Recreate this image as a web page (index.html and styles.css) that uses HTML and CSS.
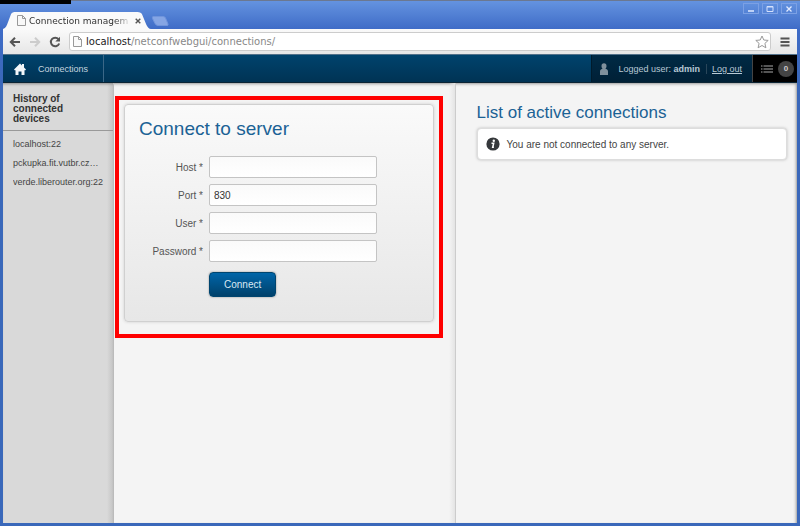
FILE: index.html
```html
<!DOCTYPE html>
<html lang="en">
<head>
<meta charset="utf-8">
<title>Connection management</title>
<link rel="stylesheet" href="styles.css">
</head>
<body>
<div class="window">
  <div class="titlebar">
    <div class="tab">
      <svg class="tab-shape" viewBox="0 0 152 18" preserveAspectRatio="none" aria-hidden="true"><path d="M0 18C3 17 4 14 5 11L8 3Q9 0 12 0H138Q142 0 143 3L147 13Q149 18 152 18Z" fill="#fafafa"/></svg>
      <svg class="page-icon" viewBox="0 0 9 11" aria-hidden="true"><path d="M.5.5h5l3 3v7h-8zM5.500.5v3h3" fill="#f8f8f8" stroke="#999"/></svg>
      <span class="tab-title">Connection managem</span>
      <button class="tab-close" aria-label="Close tab"><svg viewBox="0 0 6 6"><path d="M.7.7l4.600 4.600M5.300.7L.7 5.300" stroke="#555" stroke-width="1.400"/></svg></button>
    </div>
    <button class="new-tab" aria-label="New tab"><svg viewBox="0 0 18 10"><path d="M2 .5h10q2 0 2.500 1.500l2.500 6q.5 1.500-1 1.500h-9q-2 0-3-2l-2.500-5q-.5-2 .5-2z" fill="#85a5e4" stroke="#7195dc"/></svg></button>
    <div class="window-buttons">
      <button aria-label="Minimize"><svg viewBox="0 0 8 8"><path d="M1 6h6" stroke="#e1eaff" stroke-width="1.500"/></svg></button>
      <button aria-label="Maximize"><svg viewBox="0 0 8 8"><path d="M1 1.500h6v5H1zM1 2h6" fill="none" stroke="#d3e0fc"/></svg></button>
      <button aria-label="Close"><svg viewBox="0 0 8 8"><path d="M1.500 1.500l5 5M6.500 1.500l-5 5" stroke="#e1eaff" stroke-width="1.300"/></svg></button>
    </div>
  </div>

  <div class="toolbar">
    <button class="tool" aria-label="Back"><svg viewBox="0 0 12 12"><path d="M11 6H2M6 1.800L1.800 6 6 10.200" fill="none" stroke="#555" stroke-width="2"/></svg></button>
    <button class="tool" aria-label="Forward"><svg viewBox="0 0 12 12"><path d="M1 6h9M6 1.800L10.200 6 6 10.200" fill="none" stroke="#ccc" stroke-width="2"/></svg></button>
    <button class="tool" aria-label="Reload"><svg viewBox="0 0 12 12"><path d="M9.500 3.200A4.300 4.300 0 1 0 10.200 7.500" fill="none" stroke="#555" stroke-width="2"/><path d="M11 .8V5.500H6.300z" fill="#555"/></svg></button>
    <div class="address">
      <svg class="page-icon" viewBox="0 0 9 11" aria-hidden="true"><path d="M.5.5h5l3 3v7h-8zM5.500.5v3h3" fill="#fafafa" stroke="#999"/></svg>
      <span class="url">localhost<span class="path">/netconfwebgui/connections/</span></span>
      <button class="star" aria-label="Bookmark"><svg viewBox="0 0 14 14"><path d="M7 1l1.800 4 4.400.4-3.300 3 1 4.400L7 10.500l-3.900 2.300 1-4.400-3.300-3L5.200 5z" fill="#fff" stroke="#999" stroke-linejoin="round"/></svg></button>
    </div>
    <button class="tool menu" aria-label="Menu"><svg viewBox="0 0 12 12"><path d="M1.500 2.500h9M1.500 6h9M1.500 9.500h9" stroke="#555" stroke-width="2"/></svg></button>
  </div>

  <nav class="nav">
    <a class="nav-home" href="#">
      <svg viewBox="0 0 12 12" aria-hidden="true"><path d="M6 .5L8 2.500V1h2v3.400l2 2-1 1-.5-.5V12H7.500V8.500h-3V12h-3V6.900l-.5.500-1-1z" fill="#f3f7fa"/></svg>
      <span>Connections</span>
    </a>
    <div class="user">
      <svg viewBox="0 0 8 12" aria-hidden="true"><path d="M4 .3c1.600 0 2.500 1.100 2.500 2.600C6.500 4.200 6 5.300 5.200 5.800 6.500 6.200 8 6.500 8 8.500V12H0V8.500c0-2 1.500-2.300 2.800-2.700C2 5.300 1.500 4.200 1.500 2.900 1.500 1.400 2.400.3 4 .3z" fill="#80909c"/></svg>
      <span class="logged">Logged user: <b>admin</b></span>
      <span class="divider"></span>
      <a class="logout" href="#">Log out</a>
    </div>
    <button class="messages" aria-label="Messages: 0">
      <svg viewBox="0 0 12 8" aria-hidden="true"><path d="M0 1h1.500M2.500 1H12M0 4h1.500M2.500 4H12M0 7h1.500M2.500 7H12" stroke="#aaa"/></svg>
      <span class="count">0</span>
    </button>
  </nav>

  <div class="content">
    <aside class="history">
      <h2>History of connected devices</h2>
      <ul>
        <li><a href="#">localhost:22</a></li>
        <li><a href="#">pckupka.fit.vutbr.cz…</a></li>
        <li><a href="#">verde.liberouter.org:22</a></li>
      </ul>
    </aside>

    <main class="connect">
      <div class="highlight">
        <form class="panel">
          <h1>Connect to server</h1>
          <div class="fields">
            <label for="host">Host *</label><input id="host" type="text">
            <label for="port">Port *</label><input id="port" type="text" value="830">
            <label for="user">User *</label><input id="user" type="text">
            <label for="password">Password *</label><input id="password" type="password">
          </div>
          <button class="submit" type="button">Connect</button>
        </form>
      </div>
    </main>

    <section class="active">
      <h2>List of active connections</h2>
      <p class="notice">
        <svg viewBox="0 0 14 14" aria-hidden="true"><circle cx="7" cy="7" r="6.600" fill="#35383b"/><circle cx="7.800" cy="3.700" r="1.200" fill="#fff"/><path d="M5.500 6.300h2.200L6.700 10.300h1.200" fill="none" stroke="#fff" stroke-width="1.500"/></svg>
        <span>You are not connected to any server.</span>
      </p>
    </section>
  </div>
</div>
<div class="top-strip"></div>
</body>
</html>
```

FILE: styles.css
```css
* {
  box-sizing: border-box;
}

body {
  margin: 0;
  font-family: "Liberation Sans", Arial, sans-serif;
  font-size: 10px;
  color: #444;
}

button {
  padding: 0;
  border: 0;
  background: none;
  font: inherit;
}

svg {
  display: block;
  flex: none;
}

.window {
  display: flex;
  flex-direction: column;
  min-height: 100vh;
  padding: 0 3px 3px;
  border-top: 1px solid #6b7891;
  background: linear-gradient(#6493e0, #3f6cc7 28px, #3a68ba 80px);
}

.top-strip {
  position: absolute;
  top: 0;
  left: 0;
  width: 71px;
  height: 4px;
  background: #000;
}

/* Browser frame */
.titlebar {
  display: flex;
  height: 28px;
  align-items: flex-end;
}

.tab {
  position: relative;
  display: flex;
  width: 148px;
  height: 17px;
  align-items: center;
  padding: 0 8px 0 14px;
}

.tab-shape {
  position: absolute;
  inset: 0;
  width: 100%;
  height: 100%;
}

.page-icon {
  position: relative;
  width: 9px;
  height: 11px;
}

.tab-title {
  position: relative;
  flex: 1;
  margin: 0 4px 0 3px;
  overflow: hidden;
  font: 9px/14px "DejaVu Sans", sans-serif;
  white-space: nowrap;
  color: #333;
  mask-image: linear-gradient(90deg, #000 84%, transparent);
}

.tab-close {
  position: relative;
  width: 6px;
  margin-right: 2px;
}

.new-tab {
  width: 18px;
  margin-bottom: 3px;
}

.window-buttons {
  display: flex;
  gap: 3px;
  margin-left: auto;
  align-self: flex-start;
  padding-top: 2px;
}

.window-buttons button {
  display: grid;
  place-items: center;
  width: 16px;
  height: 11px;
  border: 1px solid #7ba0e4;
}

.window-buttons svg {
  width: 8px;
  height: 8px;
}

.toolbar {
  display: flex;
  height: 25px;
  align-items: center;
  gap: 8px;
  padding: 0 6px;
  background: linear-gradient(#fafafa, #e6e6e6);
}

.tool svg {
  width: 12px;
  height: 12px;
}

.address {
  display: flex;
  flex: 1;
  height: 19px;
  align-items: center;
  padding: 0 1px 0 3px;
  border: 1px solid #ccc;
  border-radius: 3px;
  background: #fff;
}

.url {
  flex: 1;
  margin-left: 4px;
  font: 10px/16px "DejaVu Sans", sans-serif;
  color: #222;
}

.path {
  color: #888;
}

.star svg {
  width: 14px;
  height: 14px;
}

/* Application bar */
.nav {
  display: flex;
  height: 29px;
  border-top: 1px solid #53718a;
  border-bottom: 1px solid #0b2434;
  background: linear-gradient(#00436d, #003354);
  font-size: 9px;
  color: #b8c9d5;
}

.nav-home {
  display: flex;
  align-items: center;
  gap: 12px;
  padding: 0 15px 0 11px;
  border-right: 1px solid #3b6787;
  color: #c5d5df;
  text-decoration: none;
}

.nav-home svg {
  width: 12px;
  height: 12px;
}

.user {
  display: flex;
  align-items: center;
  margin-left: auto;
  padding: 0 10px 0 8px;
  border-left: 1px solid #001b2c;
  background: linear-gradient(#002a45, #002036);
}

.user svg {
  width: 8px;
  height: 12px;
}

.logged {
  margin-left: 10px;
}

.divider {
  width: 1px;
  height: 10px;
  margin: 0 5px 0 6px;
  background: #29465a;
}

.logout {
  color: #b8c9d5;
}

.messages {
  display: flex;
  align-items: center;
  gap: 5px;
  padding: 0 3px 0 8px;
  border-left: 1px solid #444;
  background: #000;
}

.messages svg {
  width: 12px;
  height: 8px;
}

.count {
  width: 16px;
  border-radius: 8px;
  background: #444;
  font: bold 8px/16px "Liberation Sans", sans-serif;
  text-align: center;
  color: #ccc;
}

/* Page columns */
.content {
  display: grid;
  flex: 1;
  grid-template-columns: 111px 1fr 1fr;
  background: #f4f4f4;
  box-shadow: inset 0 3px 3px -2px #999, inset -3px 0 3px -2px #999;
}

.history {
  border-right: 1px solid #bbb;
  background: linear-gradient(90deg, transparent 104px, #c4c4c4), #d9d9d9;
  box-shadow: inset 0 3px 3px -2px #888;
}

.history h2 {
  margin: 0;
  padding: 11px 20px 6px 10px;
  border-bottom: 1px solid #999;
  font-size: 10px;
  line-height: 10px;
  color: #333;
}

.history ul {
  margin: 0;
  padding: 4px 4px 4px 10px;
  list-style: none;
  font-size: 9px;
  line-height: 19px;
}

.history li {
  overflow: hidden;
  text-overflow: ellipsis;
  white-space: nowrap;
}

.history a {
  color: #444;
  text-decoration: none;
}

.connect {
  padding: 13px 12px 0 1px;
  border-right: 1px solid #ccc;
  background: linear-gradient(270deg, #e4e4e4, transparent 6px);
}

.highlight {
  padding: 4px 5px 12px;
  border: 4px solid #f00;
}

.panel {
  padding: 14px 14px 24px;
  border: 1px solid #d0d0d0;
  border-radius: 4px;
  background: linear-gradient(#fafafa, #e7e7e7);
  box-shadow: 0 0 3px #ccc;
}

h1,
.active h2 {
  margin: 0;
  font-weight: normal;
  color: #1b6295;
}

h1 {
  font-size: 19px;
  line-height: 20px;
}

.fields {
  display: grid;
  grid-template-columns: 64px minmax(0, 168px);
  gap: 6px;
  align-items: center;
  margin: 17px 0 10px;
}

.fields label {
  text-align: right;
  color: #555;
}

.fields input {
  width: 100%;
  height: 22px;
  padding: 0 4px;
  border: 1px solid #c4c4c4;
  border-radius: 2px;
  background: linear-gradient(#fafafa, #fff);
  font: 10px "Liberation Sans", sans-serif;
  color: #333;
}

.submit {
  display: block;
  height: 25px;
  margin-left: 70px;
  padding: 0 14px;
  border: 1px solid #00456f;
  border-radius: 4px;
  background: linear-gradient(#0065a8, #00416b);
  box-shadow: 0 0 2px #888;
  color: #d8e8f3;
}

.active {
  padding: 20px 10px 0 21px;
}

.active h2 {
  font-size: 17px;
  line-height: 20px;
}

.notice {
  display: flex;
  align-items: center;
  gap: 7px;
  height: 32px;
  margin: 5px 0 0;
  padding: 0 8px;
  border: 1px solid #ddd;
  border-radius: 4px;
  background: #fff;
  box-shadow: 0 0 3px #bbb;
}

.notice svg {
  width: 14px;
  height: 14px;
}
```
